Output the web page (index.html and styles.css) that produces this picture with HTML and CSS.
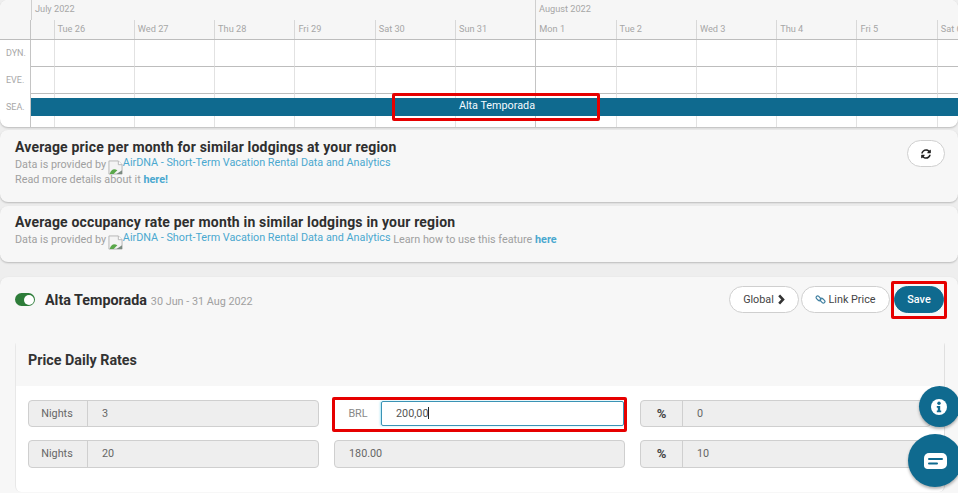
FILE: index.html
```html
<!DOCTYPE html>
<html lang="en">
<head>
<meta charset="utf-8">
<title>Season pricing</title>
<link rel="stylesheet" href="styles.css">
</head>
<body>
<div class="page">
  <section class="card tl">
    <div class="tl-row months">
      <div class="tl-label"></div>
      <div class="month month-jul">July 2022</div>
      <div class="month month-aug">August 2022</div>
    </div>
    <div class="tl-row cols days">
      <div class="tl-label"></div>
      <div class="c first"></div>
      <div class="c">Tue 26</div><div class="c">Wed 27</div><div class="c">Thu 28</div><div class="c">Fri 29</div><div class="c">Sat 30</div><div class="c">Sun 31</div>
      <div class="c strong">Mon 1</div><div class="c">Tue 2</div><div class="c">Wed 3</div><div class="c">Thu 4</div><div class="c">Fri 5</div><div class="c">Sat 6</div>
    </div>
    <div class="tl-row cols body-row">
      <div class="tl-label">DYN.</div>
      <div class="c first"></div>
      <div class="c"></div><div class="c"></div><div class="c"></div><div class="c"></div><div class="c"></div><div class="c"></div>
      <div class="c strong"></div><div class="c"></div><div class="c"></div><div class="c"></div><div class="c"></div><div class="c"></div>
    </div>
    <div class="tl-row cols body-row">
      <div class="tl-label">EVE.</div>
      <div class="c first"></div>
      <div class="c"></div><div class="c"></div><div class="c"></div><div class="c"></div><div class="c"></div><div class="c"></div>
      <div class="c strong"></div><div class="c"></div><div class="c"></div><div class="c"></div><div class="c"></div><div class="c"></div>
    </div>
    <div class="tl-row cols body-row sea">
      <div class="tl-label">SEA.</div>
      <div class="c first"></div>
      <div class="c"></div><div class="c"></div><div class="c"></div><div class="c"></div><div class="c"></div><div class="c"></div>
      <div class="c strong"></div><div class="c"></div><div class="c"></div><div class="c"></div><div class="c"></div><div class="c"></div>
      <div class="bar">Alta Temporada</div>
    </div>
  </section>

  <section class="card info info-price">
    <div class="info-text">
      <h2>Average price per month for similar lodgings at your region</h2>
      <p class="line-data">Data is provided by
        <svg class="broken" viewBox="0 0 16 16" aria-hidden="true"><path d="M1 1h10l4 4v10H1z" fill="#f4f4f4" stroke="#b4b4b4"/><path d="M11 1v4h4" fill="#fff" stroke="#b4b4b4"/><path d="M2 14c2-5 5-5 8-3l-4 4H2z" fill="#5aa84a"/><path d="M9 15l6-4v4z" fill="#7a8a80"/></svg><a class="lnk">AirDNA - Short-Term Vacation Rental Data and Analytics</a></p>
      <p class="line-more">Read more details about it <a class="lnk strong-lnk">here!</a></p>
    </div>
    <button class="pill refresh" aria-label="Refresh">
      <svg viewBox="0 0 512 512" aria-hidden="true"><path fill="#222" d="M370.72 133.28C339.458 104.008 298.888 87.962 255.848 88c-77.458.068-144.328 53.178-162.791 126.85-1.344 5.363-6.122 9.15-11.651 9.15H24.103c-7.498 0-13.194-6.807-11.807-14.176C33.933 94.924 134.813 8 256 8c66.448 0 126.791 26.136 171.315 68.685L463.03 40.97C478.149 25.851 504 36.559 504 57.941V192c0 13.255-10.745 24-24 24H345.941c-21.382 0-32.09-25.851-16.971-40.971l41.75-41.749zM32 296h134.059c21.382 0 32.09 25.851 16.971 40.971l-41.75 41.75c31.262 29.273 71.835 45.319 114.876 45.28 77.418-.07 144.315-53.144 162.787-126.849 1.344-5.363 6.122-9.15 11.651-9.15h57.304c7.498 0 13.194 6.807 11.807 14.176C478.067 417.076 377.187 504 256 504c-66.448 0-126.791-26.136-171.315-68.685L48.97 471.03C33.851 486.149 8 475.441 8 454.059V320c0-13.255 10.745-24 24-24z"/></svg>
    </button>
  </section>

  <section class="card info info-occ">
    <div class="info-text">
      <h2>Average occupancy rate per month in similar lodgings in your region</h2>
      <p class="line-data">Data is provided by
        <svg class="broken" viewBox="0 0 16 16" aria-hidden="true"><path d="M1 1h10l4 4v10H1z" fill="#f4f4f4" stroke="#b4b4b4"/><path d="M11 1v4h4" fill="#fff" stroke="#b4b4b4"/><path d="M2 14c2-5 5-5 8-3l-4 4H2z" fill="#5aa84a"/><path d="M9 15l6-4v4z" fill="#7a8a80"/></svg><a class="lnk">AirDNA - Short-Term Vacation Rental Data and Analytics</a> <span class="learn">Learn how to use this feature <a class="lnk strong-lnk">here</a></span></p>
    </div>
  </section>

  <section class="card season">
    <header class="season-head">
      <span class="toggle"><span class="knob"></span></span>
      <h3>Alta Temporada</h3>
      <span class="dates">30 Jun - 31 Aug 2022</span>
      <div class="actions">
        <button class="pill btn-global">Global
          <svg class="chev" viewBox="0 0 8 12" aria-hidden="true"><path d="M2 1.500L6.200 6 2 10.500" fill="none" stroke="#333" stroke-width="2.800"/></svg>
        </button>
        <button class="pill btn-link">
          <svg class="chain" viewBox="0 0 12 12" aria-hidden="true"><g fill="none" stroke="#3f7fa0" stroke-width="1.300"><rect x="0.800" y="3" width="6" height="3.400" rx="1.700" transform="rotate(45 3.800 4.700)"/><rect x="5.200" y="5.600" width="6" height="3.400" rx="1.700" transform="rotate(45 8.200 7.300)"/></g></svg>
          Link Price
        </button>
        <button class="pill btn-save">Save</button>
      </div>
    </header>
    <div class="rates">
      <h4>Price Daily Rates</h4>
      <div class="rates-grid">
        <div class="group"><span class="addon">Nights</span><span class="val">3</span></div>
        <div class="group group-focus"><span class="addon">BRL</span><span class="val">200,00<i class="caret"></i></span></div>
        <div class="group"><span class="addon addon-pct">%</span><span class="val">0</span></div>
        <div class="group tall"><span class="addon">Nights</span><span class="val">20</span></div>
        <div class="group tall"><span class="val val-solo">180.00</span></div>
        <div class="group tall"><span class="addon addon-pct">%</span><span class="val">10</span></div>
      </div>
    </div>
  </section>

  <div class="mark mark-bar"></div>
  <div class="mark mark-save"></div>
  <div class="mark mark-input"></div>

  <button class="fab fab-info" aria-label="Info">
    <svg viewBox="0 0 16 16" aria-hidden="true"><circle cx="8" cy="8" r="8" fill="#fff"/><circle cx="8" cy="4.300" r="1.700" fill="#0f6a8f"/><path d="M5.800 7h3.400v4.600h1v1.700H5.800v-1.700h1V8.700h-1z" fill="#0f6a8f"/></svg>
  </button>
  <button class="fab fab-chat" aria-label="Chat">
    <svg viewBox="0 0 23 16" aria-hidden="true"><path d="M5 0h13a5 5 0 0 1 5 5v6a5 5 0 0 1-5 5H3.500C1.500 16 0 14.500 0 12.500V5a5 5 0 0 1 5-5z" fill="#fff"/><path d="M5 6h13M5 10.500h8" stroke="#0f6a8f" stroke-width="2" stroke-linecap="round"/></svg>
  </button>
</div>
</body>
</html>
```
FILE: styles.css
```css
* { box-sizing: border-box; }
html, body { margin: 0; padding: 0; }
body {
  background: #eeeeee;
  font-family: Roboto, "Liberation Sans", sans-serif;
  color: #333;
}
.page {
  position: relative;
  width: 958px;
  height: 493px;
  overflow: hidden;
}
.card {
  background: #f7f7f7;
  border-radius: 8px;
  box-shadow: 0 1px 2px rgba(0, 0, 0, .22);
}

/* timeline */
.tl {
  height: 127px;
  overflow: hidden;
  margin-bottom: 3px;
  background: #fff;
}
.tl-row { display: flex; }
.tl-label {
  flex: 0 0 31px;
  width: 31px;
  border-right: 1px solid #c4c4c4;
  font-size: 9px;
  color: #a8a8a8;
  padding: 8px 0 0 6px;
}
.months {
  height: 20px;
  background: #f6f6f6;
}
.months .tl-label { border-right: 0; }
.month {
  font-size: 9.200px;
  color: #a6a6a6;
  padding: 3px 0 0 3px;
  border-left: 1px solid #cfcfcf;
}
.month-jul { width: 504px; }
.month-aug { flex: 1; }
.cols .c {
  flex: 0 0 80.300px;
  border-left: 1px solid #e2e2e2;
}
.cols .c.first { flex: 0 0 22.500px; border-left: 0; }
.cols .c.strong { border-left-color: #c4c4c4; }
.days {
  height: 20px;
  background: #f6f6f6;
  border-bottom: 1px solid #bdbdbd;
}
.days .tl-label { background: #f6f6f6; }
.days .c {
  font-size: 9.200px;
  color: #a6a6a6;
  padding: 3px 0 0 3px;
  border-left-color: #d8d8d8;
  white-space: nowrap;
}
.body-row { height: 27px; }
.body-row .c { border-bottom: 1px solid #bdbdbd; }
.body-row .tl-label { height: 27px; }
.sea { position: relative; height: 34px; }
.sea .tl-label { height: 34px; }
.sea .c { border-bottom: 0; }
.bar {
  position: absolute;
  left: 31px;
  right: 0;
  top: 4px;
  height: 18px;
  background: #0f6a8f;
  color: #f4fbff;
  font-size: 10.800px;
  line-height: 16px;
  text-align: center;
  padding-left: 5px;
}

/* info cards */
.info {
  display: flex;
  justify-content: space-between;
  padding: 9px 13px 0 15px;
}
.info-price { height: 72px; margin-bottom: 4px; }
.info-occ { height: 56px; margin-bottom: 15px; padding-top: 8px; }
.info h2 {
  margin: 0;
  font-size: 14px;
  font-weight: 700;
  line-height: 17px;
  color: #2f2f2f;
  letter-spacing: .18px;
}
.info p {
  margin: 0;
  font-size: 10.800px;
  color: #a0a0a0;
  white-space: nowrap;
}
.line-data { height: 17px; line-height: 14px; padding-top: 2px; }
.line-more { line-height: 14px; }
.broken {
  width: 15px;
  height: 15px;
  margin-left: -1px;
  vertical-align: -7px;
}
.lnk { color: #4aa8cf; position: relative; top: -2px; }
.strong-lnk { font-weight: 700; top: 0; }
.learn { color: #a0a0a0; }
.pill {
  font-family: inherit;
  height: 27px;
  border-radius: 14px;
  border: 1px solid #cfcfcf;
  background: #fff;
  padding: 0;
  color: #444;
  font-size: 10.800px;
}
.refresh {
  width: 38px;
  margin-top: 1px;
  display: flex;
  align-items: center;
  justify-content: center;
}
.refresh svg { width: 10px; height: 10px; }

/* season card */
.season {
  height: 240px;
  padding: 0 13px 0 15px;
}
.season-head {
  height: 63px;
  display: flex;
  align-items: flex-start;
}
.toggle {
  width: 20px;
  height: 13px;
  margin-top: 16px;
  border-radius: 7px;
  background: #2e7d3a;
  display: flex;
  justify-content: flex-end;
  align-items: center;
  padding-right: 1px;
}
.knob {
  width: 10px;
  height: 10px;
  border-radius: 50%;
  background: #fff;
}
.season-head h3 {
  margin: 15px 0 0 10px;
  font-size: 14.300px;
  font-weight: 700;
  line-height: 17px;
  color: #2f2f2f;
}
.dates {
  margin: 18px 0 0 4px;
  font-size: 10.800px;
  line-height: 14px;
  color: #a0a0a0;
}
.actions {
  margin: 9px 0 0 auto;
  display: flex;
  gap: 2px;
}
.btn-global {
  width: 70px;
  display: flex;
  align-items: center;
  justify-content: center;
  gap: 3px;
}
.chev { width: 8px; height: 11px; }
.btn-link {
  width: 89px;
  display: flex;
  align-items: center;
  justify-content: center;
  gap: 2px;
}
.chain { width: 11px; height: 11px; }
.btn-save {
  width: 50px;
  margin-left: 2px;
  margin-right: 1px;
  background: #0f6a8f;
  border-color: #0f6a8f;
  color: #fff;
  font-weight: 500;
}
.rates {
  background: #fff;
  border-radius: 6px;
  border-left: 1px solid #e8e8e8;
  border-right: 1px solid #e0e0e0;
  height: 152px;
}
.rates h4 {
  margin: 0;
  height: 46px;
  padding: 12px 0 0 12px;
  background: #f7f7f7;
  font-size: 14.300px;
  font-weight: 700;
  line-height: 17px;
  color: #333;
}
.rates-grid {
  display: grid;
  grid-template-columns: repeat(3, 291px);
  column-gap: 15px;
  row-gap: 13px;
  padding: 14px 0 0 12px;
}
.group {
  display: flex;
  height: 27px;
  background: #eeeeee;
  border: 1px solid #cfcfcf;
  border-radius: 4px;
  font-size: 10.800px;
  line-height: 25px;
  color: #666;
}
.group.tall { height: 28px; line-height: 26px; }
.addon {
  flex: 0 0 59px;
  text-align: center;
  border-right: 1px solid #cfcfcf;
  padding-right: 2px;
}
.addon-pct {
  flex: 0 0 42px;
  font-weight: 700;
  font-size: 13px;
  color: #444;
  padding-right: 0;
}
.val { padding-left: 14px; }
.val-solo { padding-left: 14px; }
.group-focus {
  background: #fff;
  border-color: transparent;
}
.group-focus .addon {
  flex: 0 0 46px;
  border-right: 0;
  color: #888;
  padding-right: 0;
}
.group-focus .val {
  flex: 1;
  border: 1px solid #3b93b5;
  border-radius: 2px;
  box-shadow: -1px 0 2px rgba(90, 210, 240, .5);
  line-height: 24px;
  color: #555;
}
.caret {
  display: inline-block;
  width: 1px;
  height: 12px;
  background: #222;
  vertical-align: -2px;
}

/* annotations */
.mark {
  position: absolute;
  border: 3px solid #e60000;
  border-radius: 2px;
  pointer-events: none;
}
.mark-bar { left: 392px; top: 93px; width: 208px; height: 28px; }
.mark-save { left: 891px; top: 281px; width: 56px; height: 38px; }
.mark-input { left: 332px; top: 397px; width: 295px; height: 35px; }

/* floating buttons */
.fab {
  position: absolute;
  border: 0;
  padding: 0;
  border-radius: 50%;
  background: #0f6a8f;
  box-shadow: 0 2px 3px rgba(0, 0, 0, .3);
  display: flex;
  align-items: center;
  justify-content: center;
}
.fab-info { left: 919px; top: 386px; width: 41px; height: 41px; }
.fab-info svg { width: 16px; height: 16px; margin-right: 2px; }
.fab-chat { left: 908px; top: 434px; width: 54px; height: 53px; }
.fab-chat svg { width: 23px; height: 16px; }
```
